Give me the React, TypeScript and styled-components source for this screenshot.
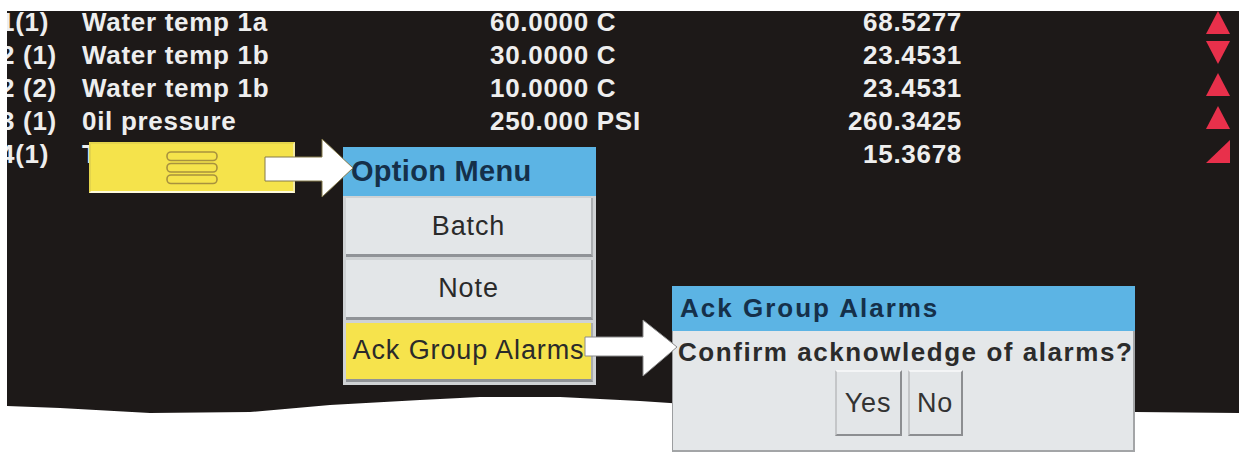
import React from 'react';
import styled, { createGlobalStyle } from 'styled-components';

const GlobalStyle = createGlobalStyle`
  html, body {
    margin: 0;
    padding: 0;
    background: #ffffff;
  }
  body {
    font-family: "Liberation Sans", Arial, sans-serif;
  }
`;

// whole picture, white paper round the torn screen grab
const Page = styled.div`
  position: relative;
  width: 1239px;
  height: 455px;
  padding: 11px 0 0 7px;
  box-sizing: border-box;
  background: #ffffff;
  overflow: hidden;
`;

const Screen = styled.div`
  width: 1232px;
  height: 404px;
  background: #1d1918;
  overflow: hidden;
  clip-path: polygon(
    0 0, 100% 0, 100% 402px,
    1128px 401px, 993px 400px, 893px 399px, 793px 397px, 693px 394px,
    633px 390px, 553px 386px, 473px 386px, 413px 389px, 323px 394px,
    243px 401px, 143px 402px, 53px 397px, 0 395px
  );
`;

const AlarmTable = styled.div`
  display: grid;
  grid-template-columns: 75px 408px 300px 172px 244px 24px 1fr;
  grid-auto-rows: 33px;
  margin-top: -5.5px;
  font-family: "Liberation Sans", Arial, sans-serif;
  font-weight: 700;
  font-size: 26px;
  line-height: 33px;
  letter-spacing: 0.7px;
  color: #eeeeee;
  white-space: nowrap;
`;

const Cell = styled.div<{ $align?: 'left' | 'right' }>`
  text-align: ${({ $align }) => $align || 'left'};
`;

const LabelCell = styled(Cell)`
  margin-left: -7px;
`;

// the alarm marks sit a touch higher than the text lines
const IndicatorCell = styled.div<{ $shift: number }>`
  display: flex;
  align-items: center;
  justify-content: center;
  margin-top: ${({ $shift }) => $shift}px;
`;

const MenuButton = styled.div`
  position: absolute;
  left: 89px;
  top: 142px;
  width: 206px;
  height: 51px;
  box-sizing: border-box;
  background: #f5e34b;
  border: 2px solid;
  border-color: #e4d44c #f2e9a4 #fdf9dc #e4d44c;
  display: flex;
  align-items: center;
  justify-content: center;
`;

const ArrowSvg = styled.svg<{ $left: number; $top: number }>`
  position: absolute;
  left: ${({ $left }) => $left}px;
  top: ${({ $top }) => $top}px;
  z-index: 5;
`;

const OptionMenu = styled.div`
  position: absolute;
  left: 343px;
  top: 147px;
  width: 253px;
  height: 238px;
  box-sizing: border-box;
  display: flex;
  flex-direction: column;
  background: #cfd2d4;
`;

const BlueHeader = styled.div<{ $size: number; $spacing: number; $height: number }>`
  height: ${({ $height }) => $height}px;
  flex: none;
  background: #5cb4e4;
  color: #15304a;
  font-family: "Liberation Sans", Arial, sans-serif;
  font-weight: 700;
  font-size: ${({ $size }) => $size}px;
  letter-spacing: ${({ $spacing }) => $spacing}px;
  padding-left: 8px;
  display: flex;
  align-items: center;
  white-space: nowrap;
`;

const MenuItems = styled.div`
  flex: 1;
  display: flex;
  flex-direction: column;
  gap: 3px;
  padding: 2px 3px 3px 3px;
`;

const MenuItem = styled.div<{ $active?: boolean }>`
  flex: 1;
  box-sizing: border-box;
  background: ${({ $active }) => ($active ? '#f6e34c' : '#e3e6e8')};
  border-bottom: 3px solid #909397;
  border-right: 2px solid #a9acaf;
  color: #2a2a2a;
  font-family: "Liberation Sans", Arial, sans-serif;
  font-size: 27px;
  letter-spacing: 0.9px;
  display: flex;
  align-items: center;
  justify-content: center;
  white-space: nowrap;
`;

const Dialog = styled.div`
  position: absolute;
  left: 672px;
  top: 286px;
  width: 463px;
  height: 166px;
  display: flex;
  flex-direction: column;
`;

const DialogBody = styled.div`
  flex: 1;
  background: #e4e7e9;
  border-left: 1px solid #9c9ea0;
  border-right: 2px solid #a3a5a7;
  border-bottom: 2px solid #a3a5a7;
  display: flex;
  flex-direction: column;
`;

const Message = styled.div`
  margin-top: 6px;
  padding-left: 5px;
  height: 30px;
  line-height: 30px;
  font-family: "Liberation Sans", Arial, sans-serif;
  font-weight: 700;
  font-size: 26px;
  letter-spacing: 1.55px;
  color: #2b2b2b;
  white-space: nowrap;
`;

const ButtonRow = styled.div`
  margin-top: 3px;
  display: flex;
  justify-content: center;
  gap: 6px;
  padding-right: 9px;
`;

const DialogButton = styled.div<{ $width: number }>`
  width: ${({ $width }) => $width}px;
  height: 66px;
  box-sizing: border-box;
  background: #e3e6e8;
  border: 2px solid;
  border-color: #f4f5f6 #8c8e91 #8c8e91 #c4c6c8;
  color: #333333;
  font-family: "Liberation Sans", Arial, sans-serif;
  font-size: 27px;
  letter-spacing: 0.8px;
  display: flex;
  align-items: center;
  justify-content: center;
`;

type Trend = 'up' | 'down' | 'rate';

const rows: { label: string; name: string; setpoint: string; value: string; trend: Trend; shift: number }[] = [
  { label: '1(1)', name: 'Water temp 1a', setpoint: '60.0000 C', value: '68.5277', trend: 'up', shift: 0 },
  { label: '2 (1)', name: 'Water temp 1b', setpoint: '30.0000 C', value: '23.4531', trend: 'down', shift: -6 },
  { label: '2 (2)', name: 'Water temp 1b', setpoint: '10.0000 C', value: '23.4531', trend: 'up', shift: -7 },
  { label: '3 (1)', name: '0il pressure', setpoint: '250.000 PSI', value: '260.3425', trend: 'up', shift: -8 },
  { label: '4(1)', name: 'Tank level', setpoint: '', value: '15.3678', trend: 'rate', shift: -5 },
];

function TrendMark({ trend }: { trend: Trend }) {
  const points =
    trend === 'up' ? '12,0 24,23 0,23' : trend === 'down' ? '0,0 24,0 12,23' : '24,0 24,23 0,23';
  return (
    <svg width="24" height="23" viewBox="0 0 24 23">
      <polygon points={points} fill="#e8304b" />
    </svg>
  );
}

function MenuIcon() {
  return (
    <svg width="52" height="34" viewBox="0 0 52 34">
      {[1, 12.5, 24].map((y) => (
        <rect key={y} x="1" y={y} width="50" height="8.5" rx="4" fill="none" stroke="#a8923e" strokeWidth="1.6" />
      ))}
    </svg>
  );
}

export default function App() {
  return (
    <>
      <GlobalStyle />
      <Page>
        <Screen>
          <AlarmTable>
            {rows.map((r) => (
              <React.Fragment key={r.label}>
                <LabelCell>{r.label}</LabelCell>
                <Cell>{r.name}</Cell>
                <Cell>{r.setpoint}</Cell>
                <Cell $align="right">{r.value}</Cell>
                <div />
                <IndicatorCell $shift={r.shift}>
                  <TrendMark trend={r.trend} />
                </IndicatorCell>
                <div />
              </React.Fragment>
            ))}
          </AlarmTable>
        </Screen>

        <MenuButton>
          <MenuIcon />
        </MenuButton>

        <OptionMenu>
          <BlueHeader $size={29} $spacing={0.3} $height={49}>Option Menu</BlueHeader>
          <MenuItems>
            <MenuItem>Batch</MenuItem>
            <MenuItem>Note</MenuItem>
            <MenuItem $active>Ack Group Alarms</MenuItem>
          </MenuItems>
        </OptionMenu>

        <Dialog>
          <BlueHeader $size={26} $spacing={2} $height={45}>Ack Group Alarms</BlueHeader>
          <DialogBody>
            <Message>Confirm acknowledge of alarms?</Message>
            <ButtonRow>
              <DialogButton $width={67}>Yes</DialogButton>
              <DialogButton $width={55}>No</DialogButton>
            </ButtonRow>
          </DialogBody>
        </Dialog>

        <ArrowSvg $left={262} $top={136} width="96" height="66" viewBox="0 0 96 66">
          <polygon
            points="3,21 60,21 60,3 91,32 60,61 60,45 3,45"
            fill="#ffffff"
            stroke="#857a4a"
            strokeWidth="1"
          />
        </ArrowSvg>

        <ArrowSvg $left={582} $top={318} width="100" height="62" viewBox="0 0 100 62">
          <polygon
            points="3,19 61,19 61,2 95,29 61,58 61,38 3,38"
            fill="#ffffff"
            stroke="#8a8a8a"
            strokeWidth="1"
          />
        </ArrowSvg>
      </Page>
    </>
  );
}
